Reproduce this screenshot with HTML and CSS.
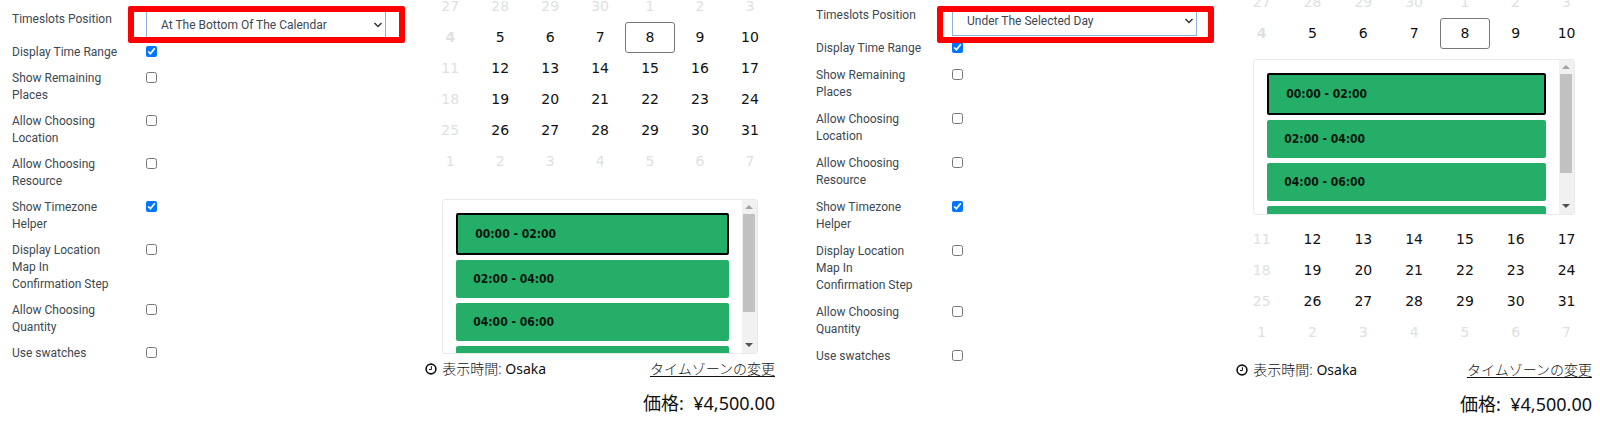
FILE: index.html
```html
<!DOCTYPE html>
<html lang="ja">

<head>
    <meta charset="UTF-8">
    <meta name="viewport" content="width=device-width, initial-scale=1.0">
    <title>Timeslots Position</title>
    <link rel="stylesheet" href="styles.css">
</head>

<body>
    <div class="page">
        <!-- timeslots at the bottom -->
        <section class="panel panel-bottom">
            <form class="settings">
                <div class="field field-select">
                    <label for="a-position">Timeslots Position</label>
                    <div class="select-wrap">
                        <select id="a-position">
                            <option>At The Bottom Of The Calendar</option>
                            <option>Under The Selected Day</option>
                        </select>
                        <svg class="chevron" viewBox="0 0 10 6"><path d="M1.5 1L5 4.5L8.5 1" /></svg>
                        <span class="marker"></span>
                    </div>
                </div>
                <div class="field"><label for="a-range">Display Time Range</label><input type="checkbox" id="a-range" checked></div>
                <div class="field"><label for="a-places">Show Remaining Places</label><input type="checkbox" id="a-places"></div>
                <div class="field"><label for="a-location">Allow Choosing Location</label><input type="checkbox" id="a-location"></div>
                <div class="field"><label for="a-resource">Allow Choosing Resource</label><input type="checkbox" id="a-resource"></div>
                <div class="field"><label for="a-timezone">Show Timezone Helper</label><input type="checkbox" id="a-timezone" checked></div>
                <div class="field"><label for="a-map">Display Location Map In<br>Confirmation Step</label><input type="checkbox" id="a-map"></div>
                <div class="field"><label for="a-quantity">Allow Choosing Quantity</label><input type="checkbox" id="a-quantity"></div>
                <div class="field"><label for="a-swatches">Use swatches</label><input type="checkbox" id="a-swatches"></div>
            </form>

            <div class="preview">
                <table class="calendar">
                    <tr class="off"><td>27</td><td>28</td><td>29</td><td>30</td><td>1</td><td>2</td><td>3</td></tr>
                    <tr><td class="off today">4</td><td>5</td><td>6</td><td>7</td><td><button type="button" class="selected">8</button></td><td>9</td><td>10</td></tr>
                    <tr><td class="off">11</td><td>12</td><td>13</td><td>14</td><td>15</td><td>16</td><td>17</td></tr>
                    <tr><td class="off">18</td><td>19</td><td>20</td><td>21</td><td>22</td><td>23</td><td>24</td></tr>
                    <tr><td class="off">25</td><td>26</td><td>27</td><td>28</td><td>29</td><td>30</td><td>31</td></tr>
                    <tr class="off"><td>1</td><td>2</td><td>3</td><td>4</td><td>5</td><td>6</td><td>7</td></tr>
                </table>
                <div class="slots">
                    <div class="slot-list">
                        <button type="button" class="slot active">00:00 - 02:00</button>
                        <button type="button" class="slot">02:00 - 04:00</button>
                        <button type="button" class="slot">04:00 - 06:00</button>
                        <button type="button" class="slot" aria-label="next"></button>
                    </div>
                    <div class="scrollbar">
                        <span class="arrow up"></span>
                        <span class="thumb"></span>
                        <span class="arrow down"></span>
                    </div>
                </div>
                <div class="timezone">
                    <svg class="clock" viewBox="0 0 12 12"><circle cx="6" cy="6" r="4.9" /><path d="M6.4 3.2V6.5H4" /></svg>
                    <span>表示時間: <span class="city">Osaka</span></span>
                    <a href="#">タイムゾーンの変更</a>
                </div>
                <div class="price">価格: &nbsp;¥4,500.00</div>
            </div>
        </section>

        <!-- timeslots under the selected day -->
        <section class="panel panel-under">
            <form class="settings">
                <div class="field field-select">
                    <label for="b-position">Timeslots Position</label>
                    <div class="select-wrap">
                        <select id="b-position">
                            <option>Under The Selected Day</option>
                            <option>At The Bottom Of The Calendar</option>
                        </select>
                        <svg class="chevron" viewBox="0 0 10 6"><path d="M1.5 1L5 4.5L8.5 1" /></svg>
                        <span class="marker"></span>
                    </div>
                </div>
                <div class="field"><label for="b-range">Display Time Range</label><input type="checkbox" id="b-range" checked></div>
                <div class="field"><label for="b-places">Show Remaining Places</label><input type="checkbox" id="b-places"></div>
                <div class="field"><label for="b-location">Allow Choosing Location</label><input type="checkbox" id="b-location"></div>
                <div class="field"><label for="b-resource">Allow Choosing Resource</label><input type="checkbox" id="b-resource"></div>
                <div class="field"><label for="b-timezone">Show Timezone Helper</label><input type="checkbox" id="b-timezone" checked></div>
                <div class="field"><label for="b-map">Display Location Map In<br>Confirmation Step</label><input type="checkbox" id="b-map"></div>
                <div class="field"><label for="b-quantity">Allow Choosing Quantity</label><input type="checkbox" id="b-quantity"></div>
                <div class="field"><label for="b-swatches">Use swatches</label><input type="checkbox" id="b-swatches"></div>
            </form>

            <div class="preview">
                <table class="calendar">
                    <tr class="off"><td>27</td><td>28</td><td>29</td><td>30</td><td>1</td><td>2</td><td>3</td></tr>
                    <tr><td class="off today">4</td><td>5</td><td>6</td><td>7</td><td><button type="button" class="selected">8</button></td><td>9</td><td>10</td></tr>
                    <tr>
                        <td colspan="7" class="slots-cell">
                            <div class="slots">
                                <div class="slot-list">
                                    <button type="button" class="slot active">00:00 - 02:00</button>
                                    <button type="button" class="slot">02:00 - 04:00</button>
                                    <button type="button" class="slot">04:00 - 06:00</button>
                                    <button type="button" class="slot" aria-label="next"></button>
                                </div>
                                <div class="scrollbar">
                                    <span class="arrow up"></span>
                                    <span class="thumb"></span>
                                    <span class="arrow down"></span>
                                </div>
                            </div>
                        </td>
                    </tr>
                    <tr><td class="off">11</td><td>12</td><td>13</td><td>14</td><td>15</td><td>16</td><td>17</td></tr>
                    <tr><td class="off">18</td><td>19</td><td>20</td><td>21</td><td>22</td><td>23</td><td>24</td></tr>
                    <tr><td class="off">25</td><td>26</td><td>27</td><td>28</td><td>29</td><td>30</td><td>31</td></tr>
                    <tr class="off"><td>1</td><td>2</td><td>3</td><td>4</td><td>5</td><td>6</td><td>7</td></tr>
                </table>
                <div class="timezone">
                    <svg class="clock" viewBox="0 0 12 12"><circle cx="6" cy="6" r="4.9" /><path d="M6.4 3.2V6.5H4" /></svg>
                    <span>表示時間: <span class="city">Osaka</span></span>
                    <a href="#">タイムゾーンの変更</a>
                </div>
                <div class="price">価格: &nbsp;¥4,500.00</div>
            </div>
        </section>
    </div>
</body>

</html>
```

FILE: styles.css
```css
* {
    box-sizing: border-box;
}

body {
    margin: 0;
    background: white;
    font-family: 'Noto Sans', 'Noto Sans CJK JP', sans-serif;
    color: #111;
}

.page {
    display: grid;
    grid-template-columns: 1fr 1fr;
}

.panel {
    display: grid;
    grid-template-columns: 13fr 11fr;
    align-items: start;
}

.panel-bottom {
    padding: 0 25px 0 12px;
}

.panel-under {
    padding: 0 8px 0 16px;
}

/* settings */
.settings {
    padding-top: 10px;
    font: 12px/17px Roboto, sans-serif;
    color: #3d4852;
}

.panel-under .settings {
    padding-top: 6px;
}

.field {
    display: grid;
    grid-template-columns: 110px 1fr;
    column-gap: 24px;
    align-items: start;
    margin-bottom: 9px;
}

.panel-under .field {
    column-gap: 26px;
    margin-bottom: 10px;
}

.panel .field-select {
    margin-bottom: 3px;
}

.field label {
    padding-top: 1px;
    margin-bottom: -1px;
}

.field input {
    width: 11px;
    height: 11px;
    margin: 3px 0 0;
    accent-color: #0075ff;
}

.select-wrap {
    position: relative;
    max-width: 240px;
}

.panel-under .select-wrap {
    max-width: 245px;
}

.select-wrap select {
    display: block;
    width: 100%;
    height: 30px;
    padding: 0 24px 0 14px;
    border: 1px solid #8fb0dc;
    border-radius: 0;
    background: white;
    font: inherit;
    color: inherit;
    appearance: none;
}

.chevron {
    position: absolute;
    top: 12px;
    right: 3px;
    width: 10px;
    height: 6px;
    fill: none;
    stroke: #333;
    stroke-width: 1.5;
}

/* red frame over the select */
.marker {
    position: absolute;
    top: -4px;
    left: -18px;
    right: -19px;
    height: 37px;
    border: 6px solid #ff0000;
    border-radius: 2px;
    pointer-events: none;
}

.panel-under .marker {
    top: 0;
    left: -15px;
    right: -17px;
}

/* calendar */
.panel-bottom .preview {
    margin-top: -9px;
}

.panel-under .preview {
    margin-top: -13px;
}

.calendar {
    width: 100%;
    table-layout: fixed;
    border-collapse: collapse;
    font: 14px/31px 'DejaVu Sans', sans-serif;
}

.calendar td {
    height: 31px;
    padding: 0;
    text-align: center;
}

.calendar .off {
    color: #dde2e0;
}

.calendar .today {
    font-weight: bold;
}

.selected {
    display: block;
    width: 100%;
    height: 31px;
    padding: 0;
    border: 1px solid #777;
    border-radius: 3px;
    background: white;
    font: inherit;
    line-height: 29px;
    color: inherit;
}

/* timeslots */
.slots {
    display: flex;
    height: 155px;
    margin: 22px 17px 0;
    border: 1px solid #e8eaea;
    border-radius: 3px;
    overflow: hidden;
}

.calendar .slots-cell {
    padding: 10px 0 9px;
}

.slots-cell .slots {
    height: 156px;
    margin: 0 17px;
}

.slot-list {
    flex: 1;
    display: flex;
    flex-direction: column;
    gap: 5px;
    padding: 13px;
}

.slot {
    flex: none;
    height: 38px;
    padding: 0 17px;
    border: 0;
    border-radius: 2px;
    background: #24ae68;
    font: bold 12px/20px 'DejaVu Sans Condensed', 'Noto Sans', sans-serif;
    text-align: left;
    color: #06150d;
}

.slot.active {
    height: 42px;
    border: 2px solid #000;
}

.scrollbar {
    display: flex;
    flex-direction: column;
    align-items: center;
    width: 15px;
    background: #f1f1f1;
}

.arrow {
    height: 0;
    border: 4px solid transparent;
}

.arrow.up {
    margin: 1px 0 5px;
    border-bottom-color: #a3a3a3;
}

.arrow.down {
    margin: auto 0 2px;
    border-top-color: #505050;
}

.thumb {
    width: 12px;
    height: 64%;
    background: #c1c1c1;
}

/* footer */
.timezone {
    display: flex;
    align-items: center;
    margin-top: 5px;
    font-size: 14px;
    font-weight: 300;
    line-height: 20px;
}

.panel-under .timezone {
    margin-top: 12px;
}

.timezone .city {
    font-weight: 400;
}

.timezone a {
    margin-left: auto;
    color: inherit;
    text-underline-offset: 2px;
}

.clock {
    width: 12px;
    height: 12px;
    margin-right: 5px;
    fill: none;
    stroke: #111;
    stroke-width: 1.6;
}

.clock path {
    stroke-width: 1;
}

.price {
    margin-top: 12px;
    font-size: 18px;
    line-height: 24px;
    text-align: right;
}
```
